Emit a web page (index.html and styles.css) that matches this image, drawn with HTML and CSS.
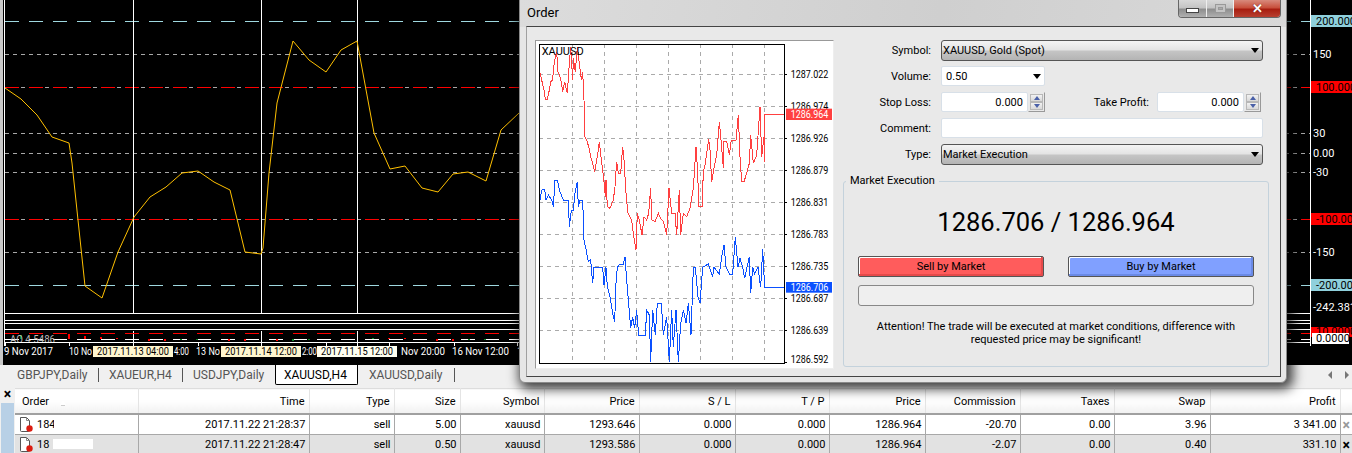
FILE: index.html
```html
<!DOCTYPE html>
<html>
<head>
  <title>Order - XAUUSD</title>
  <link rel="stylesheet" href="styles.css">
</head>
<body>
  <div class="chart">
    <svg class="chart-svg" width="1352" height="365" viewBox="0 0 1352 365">
      <rect x="0" y="0" width="3" height="365" fill="#c8c8c8"/>
      <line class="frame" x1="4.5" y1="0" x2="4.5" y2="346"/>
      <line class="frame" x1="1310.5" y1="0" x2="1310.5" y2="346"/>

      <!-- levels -->
      <line class="lvl-cyan" x1="5" y1="21.5" x2="1310" y2="21.5"/>
      <line class="lvl-grey" x1="5" y1="54.5" x2="1310" y2="54.5"/>
      <line class="lvl-base" x1="5" y1="87.5" x2="1310" y2="87.5"/>
      <line class="lvl-red" x1="5" y1="87.5" x2="1310" y2="87.5"/>
      <line class="lvl-grey" x1="5" y1="133.5" x2="1310" y2="133.5"/>
      <line class="lvl-grey" x1="5" y1="153.5" x2="1310" y2="153.5"/>
      <line class="lvl-grey" x1="5" y1="172.5" x2="1310" y2="172.5"/>
      <line class="lvl-base" x1="5" y1="219.5" x2="1310" y2="219.5"/>
      <line class="lvl-red" x1="5" y1="219.5" x2="1310" y2="219.5"/>
      <line class="lvl-grey" x1="5" y1="252.5" x2="1310" y2="252.5"/>
      <line class="lvl-cyan" x1="5" y1="285.5" x2="1310" y2="285.5"/>

      <!-- crosshair lines -->
      <line class="frame" x1="133.5" y1="0" x2="133.5" y2="313"/>
      <line class="frame" x1="261.5" y1="0" x2="261.5" y2="313"/>
      <line class="frame" x1="357.5" y1="0" x2="357.5" y2="313"/>

      <polyline class="cci" points="5,88 21,99 37,115 52,137 69,143 72,163 78,220 85,286 102,298 118,252 134,217 150,197 166,187 182,173 198,171 214,182 230,190 245,252 261,254 263,248 269,173 277,103 293,41 309,60 326,72 341,50 357,41 374,133 390,169 405,166 422,188 438,192 453,174 468,172 486,181 501,130 519,113"/>

      <!-- sub windows -->
      <rect class="pane" x="4.5" y="313.5" width="1306" height="7"/>
      <rect class="pane" x="4.5" y="323.5" width="1306" height="6"/>
      <line class="frame" x1="133.5" y1="331" x2="133.5" y2="346"/>
      <line class="frame" x1="261.5" y1="331" x2="261.5" y2="346"/>
      <line class="frame" x1="357.5" y1="331" x2="357.5" y2="346"/>
      <line class="pane-red" x1="5" y1="333.5" x2="1310" y2="333.5"/>
      <line class="pane-white" x1="5" y1="339.5" x2="1310" y2="339.5"/>
      <path class="bars-red" d="M69 334v5M85 336v3M101 337v2M117 338v1M149 339v2M165 339v2M229 339v2M245 339v2M277 339v2M389 338v1M405 338v1M437 339v2M453 339v2"/>
      <path class="bars-green" d="M21 335v4M181 339v1M197 339v1M293 339v2M309 339v1M373 338v1M469 339v1M485 339v1"/>
      <text class="pane-label" x="10" y="343" textLength="45" lengthAdjust="spacingAndGlyphs">AO 4.5486</text>
      <line class="frame" x1="5" y1="342.5" x2="1310" y2="342.5"/>
      <path class="ticks" d="M5.5 342v4M69.5 342v4M133.5 342v4M198.5 342v4M261.5 342v4M326.5 342v4M389.5 342v4M454.5 342v4M517.5 342v4"/>

      <!-- time axis -->
      <text class="axis" x="4" y="355" textLength="49" lengthAdjust="spacingAndGlyphs">9 Nov 2017</text>
      <text class="axis" x="69" y="355" textLength="23" lengthAdjust="spacingAndGlyphs">10 No</text>
      <text class="axis" x="174" y="355" textLength="15" lengthAdjust="spacingAndGlyphs">4:00</text>
      <text class="axis" x="196" y="355" textLength="24" lengthAdjust="spacingAndGlyphs">13 No</text>
      <text class="axis" x="302" y="355" textLength="15" lengthAdjust="spacingAndGlyphs">2:00</text>
      <text class="axis" x="401" y="355" textLength="44" lengthAdjust="spacingAndGlyphs">Nov 20:00</text>
      <text class="axis" x="452" y="355" textLength="57" lengthAdjust="spacingAndGlyphs">16 Nov 12:00</text>
      <text class="axis" x="517" y="355">1</text>
      <rect class="stamp" x="93" y="346" width="80" height="11"/>
      <rect class="stamp" x="221" y="346" width="80" height="11"/>
      <rect class="stamp-light" x="317" y="346" width="80" height="11"/>
      <text class="stamp-text" x="97" y="355" textLength="72" lengthAdjust="spacingAndGlyphs">2017.11.13 04:00</text>
      <text class="stamp-text" x="225" y="355" textLength="72" lengthAdjust="spacingAndGlyphs">2017.11.14 12:00</text>
      <text class="stamp-text" x="321" y="355" textLength="72" lengthAdjust="spacingAndGlyphs">2017.11.15 12:00</text>

      <!-- right scale -->
      <rect x="1311" y="15" width="41" height="12" fill="#8fd0dc"/>
      <text class="scale-dark" x="1316" y="25">200.0000</text>
      <text class="scale" x="1313" y="58">150</text>
      <rect x="1311" y="81" width="41" height="12" fill="#f00"/>
      <text class="scale-dark" x="1316" y="91">100.0000</text>
      <text class="scale" x="1313" y="137">30</text>
      <text class="scale" x="1313" y="157">0.00</text>
      <text class="scale" x="1313" y="176">-30</text>
      <rect x="1311" y="213" width="41" height="12" fill="#f00"/>
      <text class="scale-dark" x="1316" y="223">-100.000</text>
      <text class="scale" x="1313" y="256">-150</text>
      <rect x="1311" y="279" width="41" height="12" fill="#8fd0dc"/>
      <text class="scale-dark" x="1316" y="289">-200.000</text>
      <text class="scale" x="1313" y="311">-242.3811</text>
      <rect x="1311" y="327" width="41" height="10" fill="#f00"/>
      <text class="scale-dark" x="1316" y="335">10.0000</text>
      <rect x="1312" y="333" width="37" height="11" fill="#fff"/>
      <text class="scale-dark" x="1316" y="342">0.0000</text>
    </svg>
  </div>

  <div class="tabs">
    <div class="tab">GBPJPY,Daily</div>
    <div class="tab">XAUEUR,H4</div>
    <div class="tab">USDJPY,Daily</div>
    <div class="tab active">XAUUSD,H4</div>
    <div class="tab">XAUUSD,Daily</div>
    <div class="tab-arrows"><span class="arrow-left"></span><span class="arrow-right"></span></div>
  </div>

  <div class="terminal">
    <div class="side">
      <div class="side-x">×</div>
      <div class="side-bar"></div>
    </div>
    <table class="trades">
      <colgroup>
        <col class="c-order"><col class="c-time"><col class="c-type"><col class="c-size"><col class="c-symbol">
        <col class="c-price"><col class="c-sl"><col class="c-tp"><col class="c-price2"><col class="c-comm">
        <col class="c-taxes"><col class="c-swap"><col class="c-profit"><col class="c-close">
      </colgroup>
      <thead>
        <tr>
          <th class="left">Order <span class="sort"></span></th>
          <th>Time</th><th>Type</th><th>Size</th><th>Symbol</th><th>Price</th><th>S / L</th><th>T / P</th>
          <th>Price</th><th>Commission</th><th>Taxes</th><th>Swap</th><th>Profit</th><th class="blank"></th>
        </tr>
      </thead>
      <tbody>
        <tr>
          <td class="left">
            <svg class="doc" width="14" height="17" viewBox="0 0 14 17"><path d="M1.5 1.5h6l3 3v10q0 1-1 1h-7q-1 0-1-1z" fill="#fff" stroke="#555"/><path d="M7.5 1.5v3h3" fill="none" stroke="#888"/><circle cx="10.5" cy="12.5" r="3.2" fill="#dc1c10"/></svg>184<span class="smudge short"></span>
          </td>
          <td>2017.11.22 21:28:37</td><td>sell</td><td>5.00</td><td>xauusd</td><td>1293.646</td><td>0.000</td><td>0.000</td>
          <td>1286.964</td><td>-20.70</td><td>0.00</td><td>3.96</td><td>3 341.00</td><td class="del dim">×</td>
        </tr>
        <tr class="alt">
          <td class="left">
            <svg class="doc" width="14" height="17" viewBox="0 0 14 17"><path d="M1.5 1.5h6l3 3v10q0 1-1 1h-7q-1 0-1-1z" fill="#fff" stroke="#555"/><path d="M7.5 1.5v3h3" fill="none" stroke="#888"/><circle cx="10.5" cy="12.5" r="3.2" fill="#dc1c10"/></svg>18<span class="smudge long"></span>
          </td>
          <td>2017.11.22 21:28:47</td><td>sell</td><td>0.50</td><td>xauusd</td><td>1293.586</td><td>0.000</td><td>0.000</td>
          <td>1286.964</td><td>-2.07</td><td>0.00</td><td>0.40</td><td>331.10</td><td class="del">×</td>
        </tr>
      </tbody>
    </table>
  </div>

  <!-- order window -->
  <div class="window">
    <div class="titlebar">
      <span class="title">Order</span>
      <div class="controls">
        <div class="ctl ctl-min"><span></span></div>
        <div class="ctl ctl-max"><span></span></div>
        <div class="ctl ctl-close">✕</div>
      </div>
    </div>
    <div class="client">
      <div class="mini">
        <svg class="mini-svg" width="297" height="327" viewBox="48 123 891 981">
          <path class="mini-grid" d="M157 132V1090M253 132V1090M349 132V1090M445 132V1090M541 132V1090M637 132V1090M733 132V1090M58 223H793M58 319H793M58 415H793M58 511H793M58 608H793M58 703H793M58 799H793M58 895H793M58 991H793"/>
          <path class="mini-tick" d="M793 223h7M793 319h7M793 415h7M793 511h7M793 608h7M793 703h7M793 799h7M793 895h7M793 991h7M793 1087h7"/>
          <polyline class="ask" points="60,220 65,240 72,270 76,298 82,298 88,270 92,245 98,240 100,210 104,180 110,155 114,215 122,235 128,275 134,245 142,280 148,190 152,140 158,240 160,175 166,215 172,140 178,190 184,240 188,215 192,300 194,410 200,420 206,440 212,470 218,490 224,515 232,470 238,425 244,480 250,525 256,590 258,540 262,620 270,625 280,600 285,560 290,485 295,520 302,520 308,440 312,480 318,580 324,640 335,660 340,700 348,750 352,640 358,660 366,705 372,650 380,660 386,640 392,565 395,660 405,665 415,640 422,655 430,665 440,705 447,565 455,640 465,640 470,705 478,570 482,705 490,640 500,650 510,625 520,565 528,440 532,500 537,620 548,620 548,570 550,515 556,490 566,418 570,450 575,545 580,515 590,465 598,365 604,430 610,505 612,425 620,425 628,465 634,420 648,420 655,345 660,470 665,545 672,545 680,520 688,490 692,405 700,490 710,465 720,320 725,470 732,410 733,485 734,343 793,343"/>
          <g transform="translate(0,570)">
            <polyline class="bid" points="60,30 65,0 68,-2 74,-2 78,30 85,15 95,30 100,50 105,-30 112,-30 118,0 124,15 130,30 145,30 148,110 154,60 160,60 165,10 172,-24 175,50 180,30 188,30 192,150 198,178 205,215 212,210 218,280 222,232 248,232 252,285 258,232 262,290 270,320 278,370 284,395 288,280 292,232 300,222 310,222 315,200 320,270 326,340 332,415 338,380 344,415 350,360 356,437 376,437 380,360 388,375 392,515 398,360 406,435 412,340 424,340 430,435 440,380 448,515 455,360 460,470 468,360 475,515 482,400 490,360 498,400 505,340 513,435 520,232 526,232 534,320 540,340 548,232 565,222 578,260 582,232 598,252 605,200 612,165 618,232 628,252 638,252 646,140 654,232 660,205 668,232 674,265 688,200 692,310 698,232 704,252 714,232 722,292 728,178 734,292 793,292"/>
          </g>
          <rect class="mini-frame" x="58" y="132" width="735" height="958"/>
          <text class="mini-text" x="65" y="165">XAUUSD</text>
          <text class="mini-text" x="812" y="234" textLength="113" lengthAdjust="spacingAndGlyphs">1287.022</text>
          <text class="mini-text" x="812" y="330" textLength="113" lengthAdjust="spacingAndGlyphs">1286.974</text>
          <text class="mini-text" x="812" y="426" textLength="113" lengthAdjust="spacingAndGlyphs">1286.926</text>
          <text class="mini-text" x="812" y="522" textLength="113" lengthAdjust="spacingAndGlyphs">1286.879</text>
          <text class="mini-text" x="812" y="619" textLength="113" lengthAdjust="spacingAndGlyphs">1286.831</text>
          <text class="mini-text" x="812" y="714" textLength="113" lengthAdjust="spacingAndGlyphs">1286.783</text>
          <text class="mini-text" x="812" y="810" textLength="113" lengthAdjust="spacingAndGlyphs">1286.735</text>
          <text class="mini-text" x="812" y="906" textLength="113" lengthAdjust="spacingAndGlyphs">1286.687</text>
          <text class="mini-text" x="812" y="1002" textLength="113" lengthAdjust="spacingAndGlyphs">1286.639</text>
          <text class="mini-text" x="812" y="1090" textLength="113" lengthAdjust="spacingAndGlyphs">1286.592</text>
          <rect x="798" y="326" width="138" height="34" fill="#ff4040"/>
          <text class="mini-tag" x="812" y="354" textLength="113" lengthAdjust="spacingAndGlyphs">1286.964</text>
          <rect x="798" y="846" width="138" height="32" fill="#0a50ff"/>
          <text class="mini-tag" x="812" y="873" textLength="113" lengthAdjust="spacingAndGlyphs">1286.706</text>
        </svg>
      </div>

      <div class="form">
        <div class="row">
          <label>Symbol:</label>
          <div class="select wide">XAUUSD, Gold (Spot)<span class="caret"></span></div>
        </div>
        <div class="row">
          <label>Volume:</label>
          <div class="input combo">0.50<span class="caret"></span></div>
        </div>
        <div class="row stops">
          <label>Stop Loss:</label>
          <div class="input num">0.000</div>
          <div class="spin"><span class="up"></span><span class="down"></span></div>
          <label class="tp-label">Take Profit:</label>
          <div class="input num tp">0.000</div>
          <div class="spin"><span class="up"></span><span class="down"></span></div>
        </div>
        <div class="row">
          <label>Comment:</label>
          <div class="input comment"></div>
        </div>
        <div class="row">
          <label>Type:</label>
          <div class="select wide">Market Execution<span class="caret"></span></div>
        </div>

        <fieldset class="group">
          <legend>Market Execution</legend>
          <div class="quote">1286.706 / 1286.964</div>
          <div class="actions">
            <div class="btn sell">Sell by Market</div>
            <div class="btn buy">Buy by Market</div>
          </div>
          <div class="progress"></div>
          <p class="note">Attention! The trade will be executed at market conditions, difference with<br>requested price may be significant!</p>
        </fieldset>
      </div>
    </div>
  </div>
</body>
</html>
```

FILE: styles.css
```css
html, body {
  margin: 0;
  height: 453px;
  overflow: hidden;
}

body {
  background: #f0f0f0;
  font-family: Roboto, "Noto Sans", sans-serif;
  font-size: 11px;
  color: #000;
}

/* main chart */
.chart {
  height: 365px;
  background: #000;
}

.chart-svg {
  display: block;
}

.chart-svg text {
  font-family: Roboto, "Noto Sans", sans-serif;
  font-size: 11px;
}

.frame, .ticks, .pane {
  stroke: #fff;
  stroke-width: 1;
  fill: none;
}

.lvl-cyan {
  stroke: #9fd8e0;
  stroke-dasharray: 14 10;
}

.lvl-grey, .lvl-base {
  stroke: #a8a8a8;
  stroke-dasharray: 4 4;
}

.lvl-red {
  stroke: #f00;
  stroke-dasharray: 14 10;
}

.cci {
  fill: none;
  stroke: #ffc000;
  stroke-width: 1;
}

.pane-red {
  stroke: #f00;
  stroke-dasharray: 14 10;
}

.pane-white {
  stroke: #fff;
  stroke-dasharray: 14 10;
}

.bars-red {
  stroke: #f00;
  stroke-width: 2;
}

.bars-green {
  stroke: #0a8a2a;
  stroke-width: 2;
}

.chart-svg .pane-label {
  fill: #bbb;
}

.chart-svg .axis {
  fill: #fff;
}

.stamp {
  fill: #fff6cf;
}

.stamp-light {
  fill: #fffff0;
}

.chart-svg .stamp-text {
  fill: #000;
}

.chart-svg .scale {
  fill: #fff;
}

.chart-svg .scale-dark {
  fill: #000;
}

/* symbol tabs */
.tabs {
  display: flex;
  height: 20px;
  padding-left: 5px;
  background: #f0f0f0;
  box-sizing: border-box;
  font-size: 12px;
}

.tab {
  box-sizing: border-box;
  height: 14px;
  line-height: 15px;
  margin-top: 3px;
  color: #555;
  border-right: 1px solid #555;
}

.tab:nth-child(1) { width: 94px; padding-left: 12px; }
.tab:nth-child(2) { width: 84px; padding-left: 10px; }
.tab:nth-child(3) { width: 92px; padding-left: 10px; border-right: 0; }
.tab:nth-child(5) { width: 97px; padding-left: 11px; }

.tab.active {
  width: 83px;
  height: 20px;
  line-height: 20px;
  margin-top: 0;
  padding-left: 8px;
  color: #000;
  background: #fff;
  border: 1px solid #000;
  border-top: 0;
  border-radius: 0 0 2px 2px;
}

.tab-arrows {
  margin-left: auto;
  display: flex;
  gap: 13px;
  align-items: center;
  padding-right: 3px;
}

.arrow-left {
  border: 4px solid transparent;
  border-left: 0;
  border-right: 4px solid #777;
}

.arrow-right {
  border: 4px solid transparent;
  border-right: 0;
  border-left: 4px solid #777;
}

/* terminal table */
.terminal {
  display: flex;
  height: 68px;
  background: #f0f0f0;
}

.side {
  width: 15px;
  flex-shrink: 0;
}

.side-x {
  height: 18px;
  line-height: 18px;
  font-size: 14px;
  font-weight: bold;
  text-align: center;
}

.side-bar {
  height: 50px;
  margin: 0 1px;
  background: #b8d0e6;
}

.trades {
  width: 1337px;
  height: 66px;
  margin-top: 3px;
  table-layout: fixed;
  border-collapse: collapse;
  background: #fff;
}

.c-order { width: 123px; }
.c-time { width: 171px; }
.c-type { width: 85px; }
.c-size { width: 66px; }
.c-symbol { width: 84px; }
.c-price { width: 95px; }
.c-sl { width: 96px; }
.c-tp { width: 94px; }
.c-price2 { width: 96px; }
.c-comm { width: 95px; }
.c-taxes { width: 94px; }
.c-swap { width: 96px; }
.c-profit { width: 130px; }
.c-close { width: 12px; }

.trades th {
  height: 23px;
  padding: 1px 4px 0;
  font-weight: normal;
  text-align: right;
  background: linear-gradient(#fff 0, #fff 45%, #f1f1f1 100%);
  border-right: 1px solid #e4e4e4;
  border-bottom: 2px solid #a0a0a0;
  border-top: 1px solid #ddd;
}

.trades td {
  height: 19px;
  padding: 0 3px;
  text-align: right;
  white-space: nowrap;
  overflow: hidden;
  border-right: 1px solid #a8a8a8;
  border-bottom: 1px solid #a8a8a8;
}

.trades .left {
  text-align: left;
  padding-left: 7px;
}

.trades td.left {
  padding-left: 4px;
}

.sort {
  display: inline-block;
  margin-left: 8px;
  border: 3px solid transparent;
  border-top: 0;
  border-bottom: 5px solid #fff;
  box-shadow: 0 2px 0 -1px #ccc;
}

.alt td {
  background: #e2e2e2;
}

.doc {
  vertical-align: -5px;
  margin-right: 4px;
}

.smudge {
  display: inline-block;
  height: 10px;
  background: #fff;
  vertical-align: -1px;
}

.smudge.short { width: 8px; margin-left: -2px; }
.smudge.long { width: 40px; margin-left: 4px; }

.trades th.blank, .trades td.del {
  border-right: 0;
  padding: 0;
  text-align: center;
}

.del {
  font-size: 14px;
  font-weight: bold;
}

.del.dim {
  color: #999;
}

/* order window */
.window {
  position: absolute;
  left: 519px;
  top: -8px;
  width: 768px;
  height: 391px;
  box-sizing: border-box;
  padding: 0 5px 5px 6px;
  display: flex;
  flex-direction: column;
  background: linear-gradient(100deg, #dcdcdc 0, #cfcfcf 55%, #d9d9d9 100%) top / 100% 34px no-repeat, #e6e6e6;
  border: 1px solid #8a8a8a;
  border-radius: 6px;
  box-shadow: 3px 3px 12px 3px rgba(0, 0, 0, 0.75);
}

.titlebar {
  display: flex;
  justify-content: space-between;
  height: 33px;
  flex-shrink: 0;
}

.title {
  margin: 12px 0 0 1px;
  font-size: 13px;
  line-height: 16px;
}

.controls {
  display: flex;
  margin-top: 7px;
  height: 17px;
  border: 1px solid #666;
  border-top: 0;
  border-radius: 0 0 4px 4px;
  overflow: hidden;
}

.ctl {
  display: flex;
  align-items: center;
  justify-content: center;
  box-sizing: border-box;
  background: linear-gradient(#d8d8d8 0, #c4c4c4 45%, #8e8e8e 55%, #b0b0b0 100%);
  border-right: 1px solid #eee;
}

.ctl-min { width: 28px; }
.ctl-max { width: 27px; }

.ctl-min span {
  width: 11px;
  height: 3px;
  margin-top: 3px;
  background: #fff;
  border: 1px solid #444;
}

.ctl-max span {
  width: 9px;
  height: 7px;
  border: 1px solid #999;
  box-shadow: inset 0 0 0 2px #c4c4c4, inset 0 0 0 3px #999;
}

.ctl-close {
  width: 46px;
  border: 0;
  color: #fff;
  font-size: 13px;
  font-weight: bold;
  background: linear-gradient(#d88a7c 0, #c8503c 45%, #a81e10 55%, #b84030 100%);
  text-shadow: 0 0 1px #400;
}

.client {
  display: flex;
  flex: 1;
  padding: 13px 0 0 8px;
  background: #e9e9e9;
  border: 1px solid #444;
  border-left-color: #a0a0a0;
}

.mini {
  width: 297px;
  height: 327px;
  background: #fff;
  border: 1px solid #999;
  border-right-color: #eee;
  border-bottom-color: #eee;
}

.mini-svg {
  display: block;
}

.mini-grid {
  fill: none;
  stroke: #aaa;
  stroke-width: 3;
  stroke-dasharray: 12 12;
  shape-rendering: crispEdges;
}

.mini-tick {
  stroke: #000;
  stroke-width: 3;
  shape-rendering: crispEdges;
}

.ask, .bid {
  fill: none;
  stroke-width: 3;
  shape-rendering: crispEdges;
}

.ask { stroke: #ff4040; }
.bid { stroke: #0a50ff; }

.mini-frame {
  fill: none;
  stroke: #000;
  stroke-width: 3;
  shape-rendering: crispEdges;
}

.mini-text, .mini-tag {
  font-family: Roboto, "Noto Sans", sans-serif;
  font-size: 33px;
}

.mini-tag {
  fill: #fff;
}

.form {
  width: 426px;
  margin-left: 9px;
}

.row {
  display: flex;
  align-items: flex-start;
  height: 21px;
  margin-bottom: 5px;
}

.row label {
  width: 88px;
  margin-right: 10px;
  line-height: 22px;
  text-align: right;
}

.select, .input {
  position: relative;
  box-sizing: border-box;
  line-height: 20px;
}

.select {
  height: 21px;
  padding-left: 1px;
  background: linear-gradient(#f4f4f4 0, #e4e4e4 45%, #c4c4c4 55%, #b4b4b4 100%);
  border: 1px solid #555;
  border-radius: 3px;
}

.select.wide {
  width: 322px;
}

.input {
  height: 20px;
  background: #fff;
  border: 1px solid #d8e0e8;
  border-radius: 2px;
}

.combo {
  width: 104px;
  padding-left: 4px;
}

.caret {
  position: absolute;
  right: 3px;
  top: 7px;
  border: 4px solid transparent;
  border-bottom: 0;
  border-top: 5px solid #000;
}

.num {
  width: 87px;
  padding-right: 4px;
  text-align: right;
}

.comment {
  width: 322px;
}

.stops {
  padding-right: 8px;
}

.tp-label.tp-label {
  width: auto;
  margin: 0 8px 0 auto;
}

.spin {
  display: flex;
  flex-direction: column;
  justify-content: space-between;
  box-sizing: border-box;
  width: 17px;
  height: 20px;
  padding: 1px;
  background: #e9e9e9;
  border: 1px solid #999;
  border-top-color: #e9e9e9;
  border-left-color: #e9e9e9;
}

.spin span {
  position: relative;
  display: block;
  height: 8px;
  background: linear-gradient(#f6f6f6, #d4d4d4);
  box-shadow: 0 0 0 1px #b8b8b8 inset;
}

.spin span::after {
  content: '';
  position: absolute;
  left: 4px;
  border: 3px solid transparent;
}

.spin .up::after {
  top: 2px;
  border-top: 0;
  border-bottom: 4px solid #4a60a8;
}

.spin .down::after {
  top: 2px;
  border-bottom: 0;
  border-top: 4px solid #4a60a8;
}

.group {
  box-sizing: border-box;
  height: 193px;
  margin: 9px 0 0;
  padding: 0 14px;
  border: 1px solid #c4d2dc;
  border-radius: 3px;
}

.group legend {
  margin-left: -12px;
  padding: 0 4px;
  line-height: 14px;
}

.quote {
  height: 30px;
  margin-top: 19px;
  text-align: center;
  font-size: 25.5px;
  line-height: 30px;
}

.actions {
  display: flex;
  justify-content: space-between;
  margin-top: 19px;
}

.btn {
  box-sizing: border-box;
  width: 186px;
  height: 21px;
  line-height: 19px;
  text-align: center;
  border: 1px solid #555;
  border-radius: 2px;
}

.sell {
  background: #ff5c5c;
  box-shadow: inset -2px -2px 0 #e64a4a, inset 1px 1px 0 #fff;
}

.buy {
  background: #80a0ff;
  box-shadow: inset -2px -2px 0 #6a8ae6, inset 1px 1px 0 #fff;
}

.progress {
  box-sizing: border-box;
  height: 21px;
  margin-top: 8px;
  background: #efefef;
  border: 1px solid #888;
  border-radius: 3px;
}

.note {
  margin: 14px 0 0;
  text-align: center;
  line-height: 13px;
}
```
